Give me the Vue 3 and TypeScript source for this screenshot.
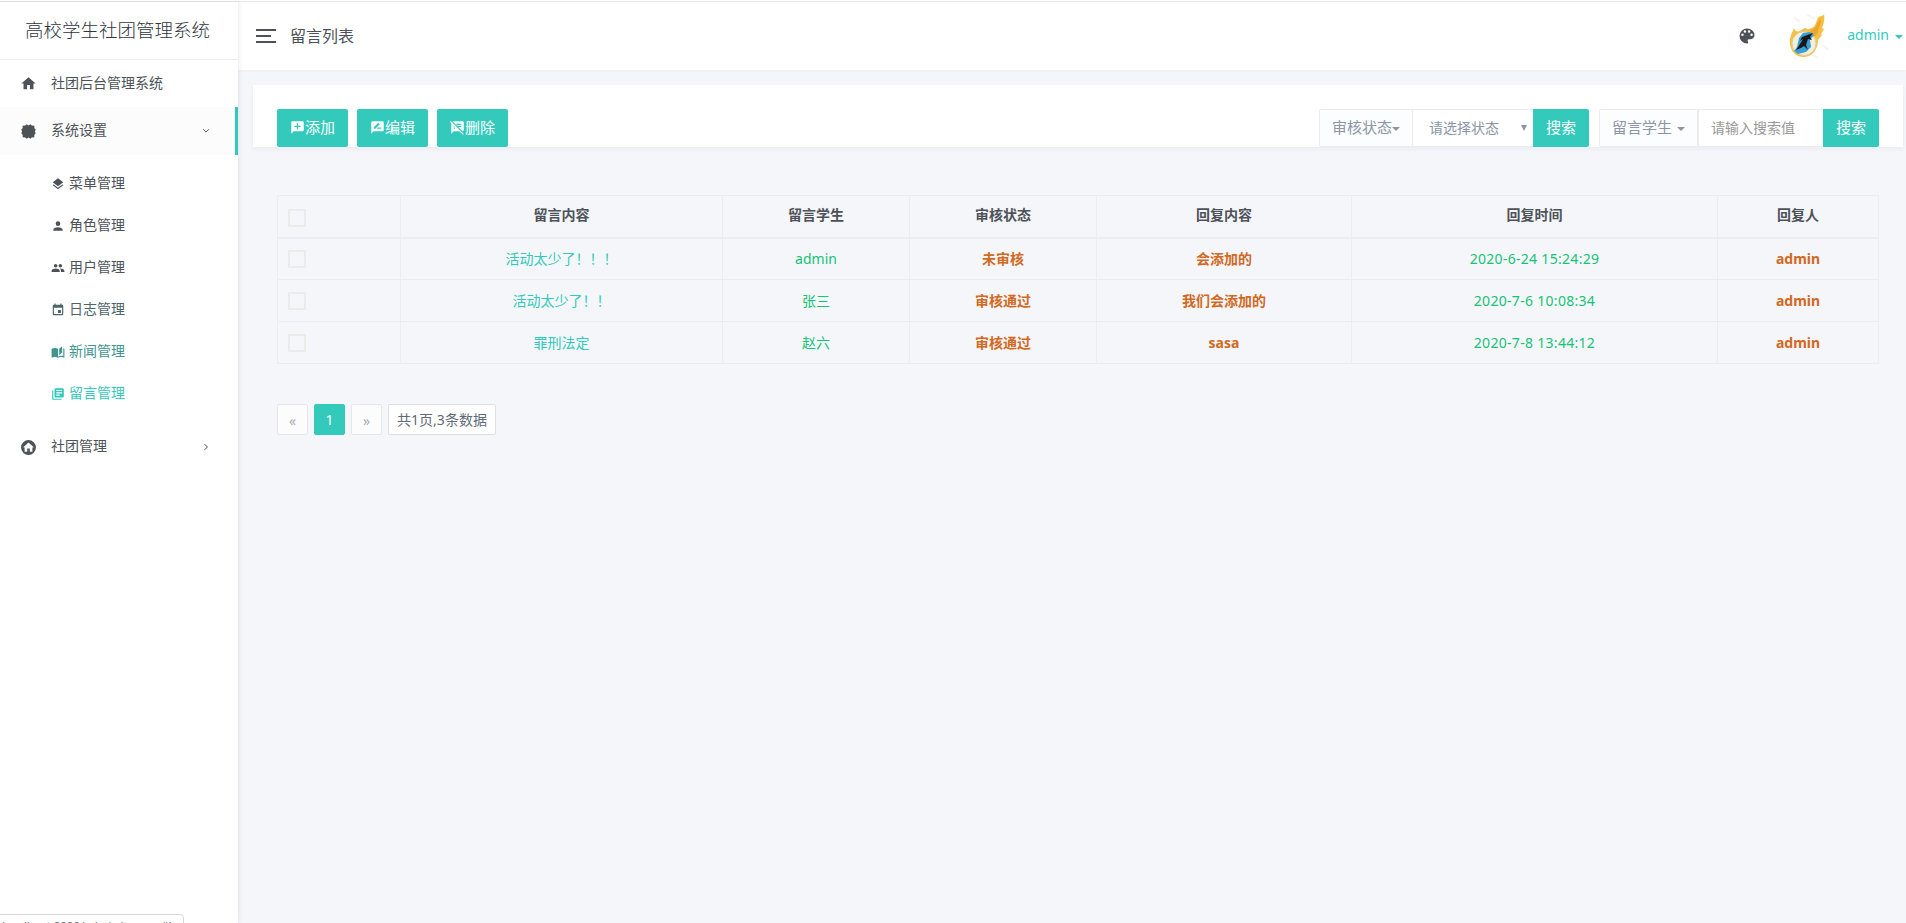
<script setup lang="ts">
interface SubItem { label: string; icon: string; tone?: string }
interface Row { content: string; student: string; status: string; reply: string; time: string; by: string }

const icons: Record<string, string> = {
  home: 'M10,20V14H14V20H19V12H22L12,3L2,12H5V20H10Z',
  gear: 'M12 3.600L14.600 1.800L16.600 3.700L20.200 3.800L20.300 7.400L22.200 9.400L21 12L22.200 14.600L20.300 16.600L20.200 20.200L16.600 20.300L14.600 22.200L12 20.600L9.400 22.200L7.400 20.300L3.800 20.200L3.700 16.600L1.800 14.600L3 12L1.800 9.400L3.700 7.400L3.800 3.800L7.400 3.700L9.400 1.800Z',
  layers: 'M12,16L19.360,10.270L21,9L12,2L3,9L4.630,10.270M12,18.540L4.620,12.810L3,14.070L12,21.070L21,14.070L19.370,12.800L12,18.540Z',
  user: 'M12,4A4,4 0 0,1 16,8A4,4 0 0,1 12,12A4,4 0 0,1 8,8A4,4 0 0,1 12,4M12,14C16.420,14 20,15.790 20,18V20H4V18C4,15.790 7.580,14 12,14Z',
  users: 'M16 11c1.660 0 3-1.340 3-3s-1.340-3-3-3-3 1.340-3 3 1.340 3 3 3zm-8 0c1.660 0 3-1.340 3-3S9.660 5 8 5 5 6.340 5 8s1.340 3 3 3zm0 2c-2.330 0-7 1.170-7 3.500V19h14v-2.500c0-2.330-4.670-3.500-7-3.500zm8 0c-.29 0-.62.02-.97.05 1.160.84 1.970 1.970 1.970 3.450V19h6v-2.500c0-2.330-4.670-3.500-7-3.500z',
  calendar: 'M19,19H5V8H19M16,1V3H8V1H6V3H5C3.890,3 3,3.890 3,5V19A2,2 0 0,0 5,21H19A2,2 0 0,0 21,19V5C21,3.890 20.100,3 19,3H18V1M17,12H12V17H17V12Z',
  book: 'M19 2L14 6.500V17.500L19 13V2M6.500 5C4.550 5 2.450 5.400 1 6.500V21.160C1 21.410 1.250 21.660 1.500 21.660C1.600 21.660 1.650 21.590 1.750 21.590C3.100 20.940 5.050 20.500 6.500 20.500C8.450 20.500 10.550 20.900 12 22C13.350 21.150 15.800 20.500 17.500 20.500C19.150 20.500 20.850 20.810 22.250 21.560C22.350 21.610 22.400 21.590 22.500 21.590C22.750 21.590 23 21.340 23 21.090V6.500C22.400 6.050 21.750 5.750 21 5.500V19C19.900 18.650 18.700 18.500 17.500 18.500C15.800 18.500 13.350 19.150 12 20V6.500C10.550 5.400 8.450 5 6.500 5Z',
  library: 'M19,7H9V5H19M15,15H9V13H15M19,11H9V9H19M20,2H8A2,2 0 0,0 6,4V16A2,2 0 0,0 8,18H20A2,2 0 0,0 22,16V4A2,2 0 0,0 20,2M4,6H2V20A2,2 0 0,0 4,22H18V20H4V6Z',
  homeCircle: 'M12 1.500a10.500 10.500 0 1 0 0 21a10.500 10.500 0 1 0 0-21M12 5L19 11.300V12H17.500V18H13.800V13.500H10.200V18H6.500V12H5V11.300Z',
  add: 'M20,2H4A2,2 0 0,0 2,4V22L6,18H20A2,2 0 0,0 22,16V4A2,2 0 0,0 20,2M17,11H13V15H11V11H7V9H11V5H13V9H17V11Z',
  edit: 'M20,2H4A2,2 0 0,0 2,4V22L6,18H20A2,2 0 0,0 22,16V4A2,2 0 0,0 20,2M6,14V11.500L12.880,4.640C13.070,4.450 13.390,4.450 13.590,4.640L15.350,6.410C15.550,6.610 15.550,6.920 15.350,7.120L8.470,14H6M18,14H10.500L12.500,12H18V14Z',
  remove: 'M10.540 11l-.54-.54L7.540 8 6 6.460 2.380 2.840 1.270 1.730 0 3l2.010 2.010L2 22l4-4h9l5.730 5.730L22 22.460 17.540 18l-7-7zM8 14H6v-2h2v2zm-2-3V9l2 2H6zm14-9H4.080L10 7.920V6h8v2h-7.920l1 1H18v2h-4.920l6.990 6.990C21.140 17.950 22 17.080 22 16V4c0-1.100-.9-2-2-2z',
  palette: 'M17.500,12A1.500,1.500 0 0,1 16,10.500A1.500,1.500 0 0,1 17.500,9A1.500,1.500 0 0,1 19,10.500A1.500,1.500 0 0,1 17.500,12M14.500,8A1.500,1.500 0 0,1 13,6.500A1.500,1.500 0 0,1 14.500,5A1.500,1.500 0 0,1 16,6.500A1.500,1.500 0 0,1 14.500,8M9.500,8A1.500,1.500 0 0,1 8,6.500A1.500,1.500 0 0,1 9.500,5A1.500,1.500 0 0,1 11,6.500A1.500,1.500 0 0,1 9.500,8M6.500,12A1.500,1.500 0 0,1 5,10.500A1.500,1.500 0 0,1 6.500,9A1.500,1.500 0 0,1 8,10.500A1.500,1.500 0 0,1 6.500,12M12,3A9,9 0 0,0 3,12A9,9 0 0,0 12,21A1.500,1.500 0 0,0 13.500,19.500C13.500,19.110 13.350,18.760 13.110,18.500C12.880,18.230 12.730,17.880 12.730,17.500A1.500,1.500 0 0,1 14.230,16H16A5,5 0 0,0 21,11C21,6.580 16.970,3 12,3Z',
}

const subItems: SubItem[] = [
  { label: '菜单管理', icon: 'layers' },
  { label: '角色管理', icon: 'user' },
  { label: '用户管理', icon: 'users' },
  { label: '日志管理', icon: 'calendar', tone: 'fade' },
  { label: '新闻管理', icon: 'book', tone: 'mid' },
  { label: '留言管理', icon: 'library', tone: 'current' },
]
const actions = [
  { label: '添加', icon: 'add' },
  { label: '编辑', icon: 'edit' },
  { label: '删除', icon: 'remove' },
]
const headers = ['留言内容', '留言学生', '审核状态', '回复内容', '回复时间', '回复人']
const rows: Row[] = [
  { content: '活动太少了！！！', student: 'admin', status: '未审核', reply: '会添加的', time: '2020-6-24 15:24:29', by: 'admin' },
  { content: '活动太少了！！', student: '张三', status: '审核通过', reply: '我们会添加的', time: '2020-7-6 10:08:34', by: 'admin' },
  { content: '罪刑法定', student: '赵六', status: '审核通过', reply: 'sasa', time: '2020-7-8 13:44:12', by: 'admin' },
]
</script>

<template>
  <div class="page">
    <aside class="sidebar">
      <div class="brand">高校学生社团管理系统</div>
      <nav>
        <a class="item"><svg class="ico" viewBox="0 0 24 24"><path :d="icons.home" /></svg><span>社团后台管理系统</span></a>
        <a class="item open">
          <svg class="ico" viewBox="0 0 24 24"><path :d="icons.gear" /></svg><span>系统设置</span>
          <svg class="arrow" viewBox="0 0 8 8"><path d="M1.200 2.300L4 5.100L6.800 2.300" /></svg>
        </a>
        <div class="sub">
          <a v-for="s in subItems" :key="s.label" class="sub-item" :class="s.tone">
            <svg viewBox="0 0 24 24"><path :d="icons[s.icon]" /></svg><span>{{ s.label }}</span>
          </a>
        </div>
        <a class="item">
          <svg class="ico" viewBox="0 0 24 24"><path fill-rule="evenodd" :d="icons.homeCircle" /></svg><span>社团管理</span>
          <svg class="arrow" viewBox="0 0 8 8"><path d="M2.600 1.200L5.400 4L2.600 6.800" /></svg>
        </a>
      </nav>
      <div class="status"><span>localhost:8080/admin/to-msg#!</span></div>
    </aside>

    <div class="main">
      <header class="topbar">
        <div class="burger"><i></i><i></i><i></i></div>
        <span class="title">留言列表</span>
        <svg class="palette" viewBox="0 0 24 24"><path :d="icons.palette" /></svg>
        <svg class="avatar" viewBox="0 0 48 48">
          <path d="M8 5l6 5M20 2l9 5M37 33l5 5M27 43l5 3" stroke="#f4f4f5" stroke-width="2" />
          <path d="M4 32C3 26 6 21 8 16c1 3 3 4 6 3 2-1 3-3 6-3 1 2 3 1 6 0 4-2 4-7 6-10 2-3 5-1 6-4 1 5 0 9-2 14l2 1-3 5 1 1-4 5c0 9-5 16-13 17C11 46 5 40 4 32Z" fill="#f6c044" />
          <path d="M24 19c6-3 8-8 10-13 2 4 0 8-2 12 1 2-1 5-4 7z" fill="#eca62e" />
          <circle cx="18" cy="31.500" r="12" fill="#f4efd8" stroke="#d9cda0" />
          <path d="M13 26l4-5 7-1 4 3-4 5 1 7-5 5-8 2-4-3 3-4z" fill="#399fd6" />
          <path d="M16 25l8-3 3-1-3 4 2 3-4-1-2 6 2 5-4-4-3 2-5 2 4-6 3-5-3 2z" fill="#15191e" />
        </svg>
        <span class="user">admin</span><i class="caret"></i>
      </header>

      <section class="card">
        <button v-for="a in actions" :key="a.label" class="btn action">
          <svg viewBox="0 0 24 24"><path :d="icons[a.icon]" /></svg>{{ a.label }}
        </button>
        <div class="group first">
          <div class="drop">审核状态<i class="caret"></i></div>
          <div class="field select"><span>请选择状态</span><i class="tri"></i></div>
          <button class="btn search">搜索</button>
        </div>
        <div class="group second">
          <div class="drop">留言学生<i class="caret"></i></div>
          <div class="field text"><span>请输入搜索值</span></div>
          <button class="btn search">搜索</button>
        </div>
      </section>

      <table>
        <colgroup><col class="c0" /><col class="c1" /><col class="c2" /><col class="c3" /><col class="c4" /><col class="c5" /><col class="c6" /></colgroup>
        <thead>
          <tr><th class="pick"><i class="check"></i></th><th v-for="h in headers" :key="h">{{ h }}</th></tr>
        </thead>
        <tbody>
          <tr v-for="r in rows" :key="r.time">
            <td class="pick"><i class="check"></i></td>
            <td class="teal">{{ r.content }}</td>
            <td class="green">{{ r.student }}</td>
            <td class="orange">{{ r.status }}</td>
            <td class="orange">{{ r.reply }}</td>
            <td class="green time">{{ r.time }}</td>
            <td class="orange">{{ r.by }}</td>
          </tr>
        </tbody>
      </table>

      <div class="pager">
        <span class="pg off">«</span><span class="pg on">1</span><span class="pg off">»</span><span class="pg info">共1页,3条数据</span>
      </div>
    </div>
  </div>
</template>

<style>
body { background: #f5f6fa; }
</style>

<style scoped>
* { box-sizing: border-box; }
.page { display: flex; height: 923px; overflow: hidden; border-top: 1px solid #fff; background: #f5f6fa; color: #4d5259; font: 14px/1.5 "Noto Sans", "Noto Sans CJK SC", sans-serif; box-shadow: inset 0 1px #e6e7ea; }
svg { fill: currentColor; flex: none; }
.sidebar { position: relative; z-index: 2; width: 238px; margin-top: 1px; background: #fff; box-shadow: 0 0 5px rgba(60, 70, 110, .16); flex: none; }
.brand { height: 58px; padding: 11px 0 0 25px; border-bottom: 1px solid #ebebeb; font-size: 18.500px; font-weight: 300; color: #30353c; line-height: 33px; white-space: nowrap; }
.item { display: flex; align-items: center; height: 48px; padding-left: 20px; }
.item:first-child { height: 47px; }
.item span, .sub-item span { padding-bottom: 3px; }
.ico { width: 17px; height: 17px; margin-right: 14px; }
.item.open { background: #fcfcfc; border-right: 3px solid #33cabb; }
.arrow { width: 8px; height: 8px; margin-left: auto; margin-right: 28px; fill: none; stroke: #4d5259; }
.open .arrow { margin-right: 25px; }
.sub { padding: 8px 0; }
.sub-item { display: flex; align-items: center; height: 42px; padding-left: 51px; }
.sub-item svg { width: 14px; height: 14px; margin: 0 4px 1px 0; }
.fade { color: #4b6468; }
.mid { color: #40968f; }
.current { color: #33cabb; }
.status { position: absolute; left: -1px; bottom: -17px; width: 185px; height: 26px; padding-left: 2px; border: 1px solid #d5d7da; border-radius: 0 4px 0 0; background: #fff; overflow: hidden; color: #66696e; font-size: 11.500px; line-height: 22px; white-space: nowrap; }
.main { flex: 1; min-width: 0; }
.topbar { display: flex; align-items: center; height: 68px; margin-top: 1px; padding-left: 18px; background: #fff; box-shadow: 0 1px 2px rgba(60, 70, 110, .04); }
.burger { display: grid; gap: 4px; width: 20px; }
.burger i { height: 2px; background: #4d5259; }
.burger i:nth-child(2) { width: 15px; }
.title { margin-left: 14px; font-size: 16px; }
.palette { width: 20px; height: 20px; margin-left: auto; }
.avatar { width: 48px; height: 48px; margin-left: 29px; fill: none; }
.user { margin-left: 13px; padding-bottom: 3px; color: #33cabb; }
.caret { width: 0; border: 4px solid transparent; border-top-color: currentColor; border-bottom: 0; }
.topbar .caret { margin: 1px 3px 0 6px; color: #33cabb; }
.card { display: flex; height: 62px; margin: 15px 3px 0 15px; padding: 24px 24px 0; background: #fff; box-shadow: 0 2px 4px rgba(60, 70, 110, .06); }
.btn { height: 38px; padding: 0 0 2px; border: 0; border-radius: 2px; background: #33cabb; color: #fff; font: inherit; font-size: 15px; }
.action { display: flex; align-items: center; justify-content: center; width: 71px; margin-right: 9px; }
.action svg { width: 15px; height: 15px; }
.group { display: flex; height: 38px; }
.first { margin-left: auto; }
.second { margin-left: 10px; }
.drop { display: flex; align-items: center; width: 94px; padding: 0 0 1px 12px; border: 1px solid #ebebeb; border-radius: 2px 0 0 2px; background: #fcfdfe; color: #8b95a5; font-size: 15px; white-space: nowrap; }
.drop .caret { margin-top: 2px; }
.second .drop { width: 99px; }
.second .drop .caret { margin-left: 5px; }
.field { display: flex; align-items: center; padding-bottom: 1px; border: solid #ebebeb; border-width: 1px 0; background: #fff; color: #8b95a5; white-space: nowrap; }
.select { width: 120px; padding: 0 6px 1px 16px; justify-content: space-between; }
.tri { border: 3px solid transparent; border-top: 6px solid currentColor; border-bottom: 0; }
.text { width: 125px; padding-left: 12px; border-left-width: 1px; color: #999; }
.search { width: 56px; border-radius: 0 2px 2px 0; }
table { width: 1601px; margin: 48px 0 0 39px; table-layout: fixed; border-collapse: collapse; text-align: center; }
.c0 { width: 123px; } .c1 { width: 322px; } .c2 { width: 187px; } .c3 { width: 187px; } .c4 { width: 255px; } .c5 { width: 366px; } .c6 { width: 161px; }
th, td { height: 42px; padding: 0; border: 1px solid #ebedef; line-height: 20px; }
th { height: 42px; padding-bottom: 2px; border-bottom-width: 2px; font-weight: 700; }
.pick { padding: 0 0 0 10px; text-align: left; }
th.pick { padding-top: 3px; }
.check { display: block; width: 18px; height: 18px; border: 2px solid #ebebeb; }
.teal { color: #33cabb; }
.green { color: #15c377; }
.orange { color: #d2691e; font-weight: 700; }
.time { letter-spacing: .3px; }
.pager { display: flex; gap: 6px; margin: 40px 0 0 39px; }
.pg { display: flex; align-items: center; justify-content: center; width: 31px; height: 31px; padding-bottom: 1px; border: 1px solid #e5e6e9; border-radius: 2px; background: #fcfcfd; color: #616a78; }
.off { padding: 1px 0 0; color: #aaacb0; }
.on { border-color: #33cabb; background: #33cabb; color: #fff; }
.info { width: 108px; background: #fff; white-space: nowrap; border-color: #dddfe3; }
</style>
